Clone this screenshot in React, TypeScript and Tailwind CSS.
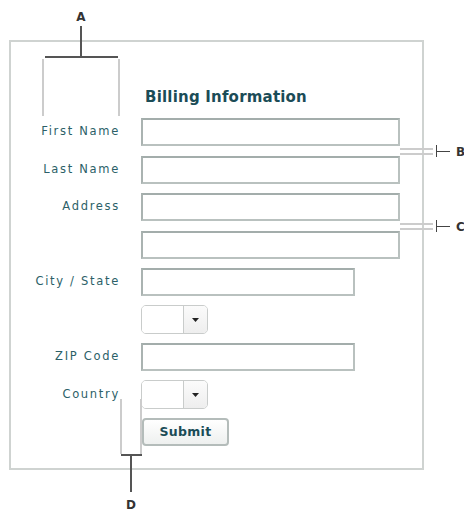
import React from "react";

const font = { fontFamily: '"DejaVu Sans", Verdana, sans-serif' };

function TextInput({ w }: { w: string }) {
  return (
    <div
      className={`h-[28px] ${w} bg-white border-2 border-[#b9c1bf] border-t-[#a3adab] border-l-[#aab3b1]`}
    />
  );
}

function Select() {
  return (
    <div className="h-[29px] w-[67px] flex rounded-[5px] border border-[#c9cccb] bg-white overflow-hidden">
      <div className="flex-1 bg-white" />
      <div className="w-[24px] border-l border-[#c9cccb] bg-gradient-to-b from-[#fbfbfb] to-[#eeeeee] flex items-center justify-center">
        <svg width="7" height="4" viewBox="0 0 7 4">
          <path d="M0 0 H7 L3.5 4 Z" fill="#222" />
        </svg>
      </div>
    </div>
  );
}

function Row({ label, children }: { label?: string; children: React.ReactNode }) {
  return (
    <div className="flex items-center h-[28px]">
      <div className="w-[109px] text-right text-[11.5px] tracking-[1.7px] text-[#2c5f68] -mr-[1px]">
        {label}
      </div>
      <div className="ml-[22px] flex items-center">{children}</div>
    </div>
  );
}

export default function App() {
  return (
    <div className="relative w-[464px] h-[512px] bg-white overflow-hidden" style={font}>
      <div className="pt-[40px] pl-[9px]">
        <div className="w-[415px] h-[430px] border-2 border-[#cfd3d1]">
          <div className="pt-[45px] pl-[134px] text-[15px] font-bold text-[#1b4c57] leading-[21px] tracking-[0.2px]">
            Billing Information
          </div>
          <div className="mt-[10px] flex flex-col gap-[9.5px]">
            <Row label="First Name"><TextInput w="w-[259px]" /></Row>
            <Row label="Last Name"><TextInput w="w-[259px]" /></Row>
            <Row label="Address"><TextInput w="w-[259px]" /></Row>
            <Row><TextInput w="w-[259px]" /></Row>
            <Row label="City / State"><TextInput w="w-[214px]" /></Row>
            <Row><Select /></Row>
            <Row label="ZIP Code"><TextInput w="w-[214px]" /></Row>
            <Row label="Country"><Select /></Row>
            <Row>
              <button className="ml-[1px] h-[28px] w-[87px] rounded-[4px] border-2 border-[#b4bcba] bg-gradient-to-b from-white to-[#eef0ef] text-[12.5px] font-bold text-[#1b4c57] tracking-[0.3px]">
                Submit
              </button>
            </Row>
          </div>
        </div>
      </div>

      {/* Annotation A */}
      <div className="absolute left-[74px] top-[8px] w-[14px] text-center text-[12px] font-bold text-[#333]">A</div>
      <div className="absolute left-[80px] top-[26px] w-[2px] h-[31px] bg-[#555]" />
      <div className="absolute left-[45px] top-[56px] w-[73px] h-[2px] bg-[#555]" />
      <div className="absolute left-[42px] top-[59px] w-[2px] h-[57px] bg-[#cccccc]" />
      <div className="absolute left-[118px] top-[59px] w-[2px] h-[57px] bg-[#cccccc]" />

      {/* Annotation B */}
      <div className="absolute left-[400px] top-[148px] w-[33px] h-[2px] bg-[#cccccc]" />
      <div className="absolute left-[400px] top-[153px] w-[33px] h-[2px] bg-[#cccccc]" />
      <div className="absolute left-[436px] top-[145px] w-[1px] h-[12px] bg-[#444]" />
      <div className="absolute left-[437px] top-[151px] w-[13px] h-[1px] bg-[#444]" />
      <div className="absolute left-[456px] top-[143px] text-[12px] font-bold text-[#333]">B</div>

      {/* Annotation C */}
      <div className="absolute left-[400px] top-[223px] w-[33px] h-[2px] bg-[#cccccc]" />
      <div className="absolute left-[400px] top-[228px] w-[33px] h-[2px] bg-[#cccccc]" />
      <div className="absolute left-[436px] top-[220px] w-[1px] h-[12px] bg-[#444]" />
      <div className="absolute left-[437px] top-[226px] w-[13px] h-[1px] bg-[#444]" />
      <div className="absolute left-[456px] top-[218px] text-[12px] font-bold text-[#333]">C</div>

      {/* Annotation D */}
      <div className="absolute left-[120px] top-[399px] w-[2px] h-[55px] bg-[#cccccc]" />
      <div className="absolute left-[140px] top-[399px] w-[2px] h-[55px] bg-[#cccccc]" />
      <div className="absolute left-[121px] top-[454px] w-[21px] h-[2px] bg-[#555]" />
      <div className="absolute left-[130px] top-[456px] w-[2px] h-[36px] bg-[#555]" />
      <div className="absolute left-[124px] top-[496px] w-[14px] text-center text-[12px] font-bold text-[#333]">D</div>
    </div>
  );
}
